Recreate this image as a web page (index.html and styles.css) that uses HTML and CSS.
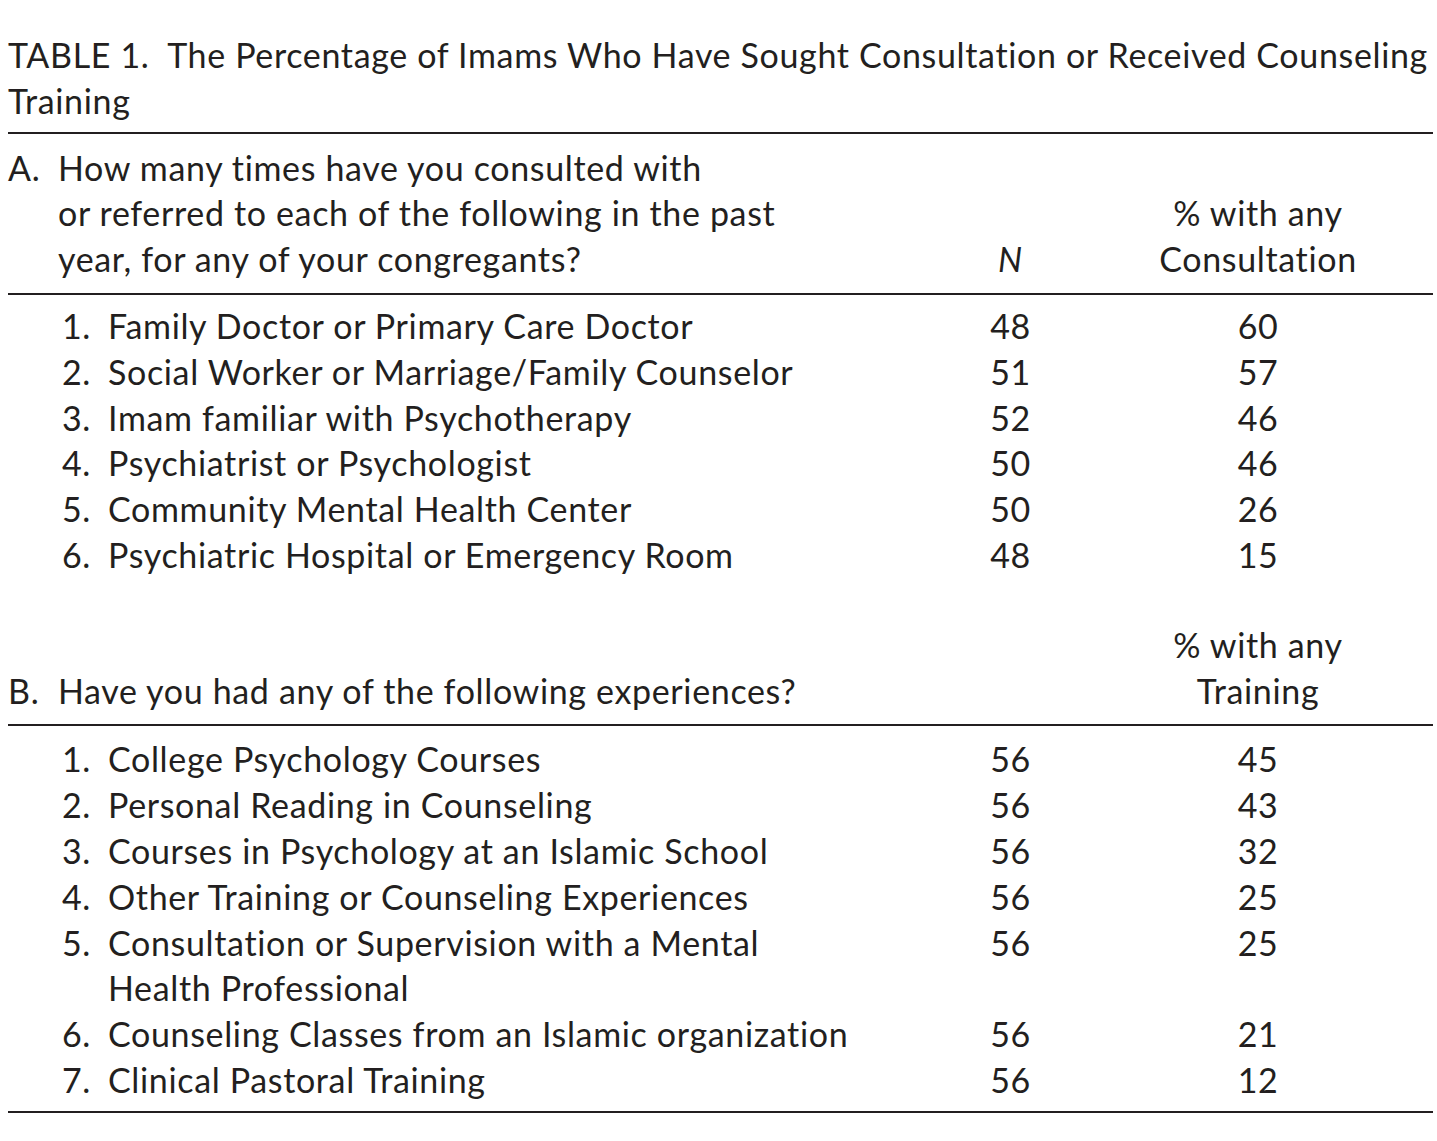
FILE: index.html
```html
<!DOCTYPE html>
<html lang="en">
<head>
<meta charset="utf-8">
<title>Table 1</title>
<link rel="stylesheet" href="styles.css">
</head>
<body>
<div class="page">
  <p class="caption">TABLE 1.&nbsp; The Percentage of Imams Who Have Sought Consultation or Received Counseling Training</p>
  <table class="data">
    <colgroup>
      <col class="c-label">
      <col class="c-n">
      <col class="c-pct">
    </colgroup>
    <thead>
      <tr class="head">
        <th class="lab"><div class="sec-row"><span class="sec">A.</span><span class="sec-text">How many times have you consulted with<br>or referred to each of the following in the past<br>year, for any of your congregants?</span></div></th>
        <th class="num"><i>N</i></th>
        <th class="num">% with any<br>Consultation</th>
      </tr>
    </thead>
    <tbody class="rows">
      <tr><td class="lab"><div class="item-row"><span class="idx">1.</span><span class="item">Family Doctor or Primary Care Doctor</span></div></td><td class="num">48</td><td class="num">60</td></tr>
      <tr><td class="lab"><div class="item-row"><span class="idx">2.</span><span class="item">Social Worker or Marriage/Family Counselor</span></div></td><td class="num">51</td><td class="num">57</td></tr>
      <tr><td class="lab"><div class="item-row"><span class="idx">3.</span><span class="item">Imam familiar with Psychotherapy</span></div></td><td class="num">52</td><td class="num">46</td></tr>
      <tr><td class="lab"><div class="item-row"><span class="idx">4.</span><span class="item">Psychiatrist or Psychologist</span></div></td><td class="num">50</td><td class="num">46</td></tr>
      <tr><td class="lab"><div class="item-row"><span class="idx">5.</span><span class="item">Community Mental Health Center</span></div></td><td class="num">50</td><td class="num">26</td></tr>
      <tr><td class="lab"><div class="item-row"><span class="idx">6.</span><span class="item">Psychiatric Hospital or Emergency Room</span></div></td><td class="num">48</td><td class="num">15</td></tr>
    </tbody>
    <tbody class="headb">
      <tr class="head">
        <th class="lab"><div class="sec-row"><span class="sec">B.</span><span class="sec-text">Have you had any of the following experiences?</span></div></th>
        <th class="num"></th>
        <th class="num">% with any<br>Training</th>
      </tr>
    </tbody>
    <tbody class="rows last">
      <tr><td class="lab"><div class="item-row"><span class="idx">1.</span><span class="item">College Psychology Courses</span></div></td><td class="num">56</td><td class="num">45</td></tr>
      <tr><td class="lab"><div class="item-row"><span class="idx">2.</span><span class="item">Personal Reading in Counseling</span></div></td><td class="num">56</td><td class="num">43</td></tr>
      <tr><td class="lab"><div class="item-row"><span class="idx">3.</span><span class="item">Courses in Psychology at an Islamic School</span></div></td><td class="num">56</td><td class="num">32</td></tr>
      <tr><td class="lab"><div class="item-row"><span class="idx">4.</span><span class="item">Other Training or Counseling Experiences</span></div></td><td class="num">56</td><td class="num">25</td></tr>
      <tr><td class="lab"><div class="item-row"><span class="idx">5.</span><span class="item">Consultation or Supervision with a Mental<br>Health Professional</span></div></td><td class="num">56</td><td class="num">25</td></tr>
      <tr><td class="lab"><div class="item-row"><span class="idx">6.</span><span class="item">Counseling Classes from an Islamic organization</span></div></td><td class="num">56</td><td class="num">21</td></tr>
      <tr><td class="lab"><div class="item-row"><span class="idx">7.</span><span class="item">Clinical Pastoral Training</span></div></td><td class="num">56</td><td class="num">12</td></tr>
    </tbody>
  </table>
</div>
</body>
</html>
```

FILE: styles.css
```css
html, body {
  margin: 0;
  padding: 0;
  background: #ffffff;
}

body {
  font-family: "Lato", "Liberation Sans", sans-serif;
  color: #231f20;
  font-size: 34px;
  line-height: 45.8px;
  letter-spacing: 0.65px;
}

.page {
  padding: 32px 4px 0 8px;
  width: 1425px;
}

.caption {
  margin: 0;
  padding-bottom: 8px;
  border-bottom: 2px solid #231f20;
}

.data {
  width: 1425px;
  border-collapse: collapse;
  table-layout: fixed;
}

.c-label { width: 930px; }
.c-n { width: 145px; }
.c-pct { width: 350px; }

.data th,
.data td {
  padding: 0;
  font-weight: normal;
}

.data th {
  vertical-align: bottom;
}

.data td {
  vertical-align: top;
}

.data .num {
  text-align: center;
}

.data .lab {
  text-align: left;
}

.sec-row,
.item-row {
  display: flex;
  align-items: flex-start;
}

.sec {
  flex: 0 0 50px;
}

.idx {
  flex: 0 0 46px;
  margin-left: 54px;
}

thead .head th {
  padding-top: 11px;
  padding-bottom: 11px;
  border-bottom: 2px solid #231f20;
}

.headb .head th {
  padding-top: 44px;
  padding-bottom: 11px;
  border-bottom: 2px solid #231f20;
}

.rows tr:first-child td {
  padding-top: 8px;
}

.rows.last tr:first-child td {
  padding-top: 10px;
}

.rows.last tr:last-child td {
  padding-bottom: 8px;
  border-bottom: 2px solid #231f20;
}
```
